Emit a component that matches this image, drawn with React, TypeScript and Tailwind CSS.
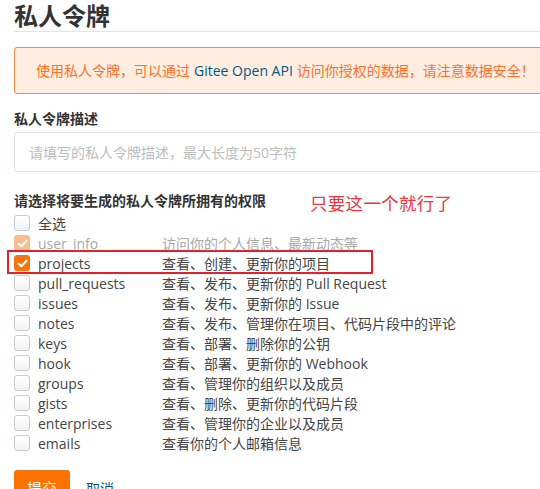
import React from "react";

const rows: { name: string; desc: string; state?: "disabled" | "checked" }[] = [
  { name: "user_info", desc: "访问你的个人信息、最新动态等", state: "disabled" },
  { name: "projects", desc: "查看、创建、更新你的项目", state: "checked" },
  { name: "pull_requests", desc: "查看、发布、更新你的 Pull Request" },
  { name: "issues", desc: "查看、发布、更新你的 Issue" },
  { name: "notes", desc: "查看、发布、管理你在项目、代码片段中的评论" },
  { name: "keys", desc: "查看、部署、删除你的公钥" },
  { name: "hook", desc: "查看、部署、更新你的 Webhook" },
  { name: "groups", desc: "查看、管理你的组织以及成员" },
  { name: "gists", desc: "查看、删除、更新你的代码片段" },
  { name: "enterprises", desc: "查看、管理你的企业以及成员" },
  { name: "emails", desc: "查看你的个人邮箱信息" },
];

function Box({ state }: { state?: "disabled" | "checked" }) {
  if (state === "checked" || state === "disabled") {
    return (
      <div
        className={`flex h-4 w-4 items-center justify-center rounded-[3px] ${
          state === "checked" ? "bg-[#f7730e]" : "bg-[#fbbd8d]"
        }`}
      >
        <svg width="11" height="11" viewBox="0 0 10 10">
          <path d="M1.5 5.2 L4 7.5 L8.6 2.6" fill="none" stroke="white" strokeWidth="2" strokeLinecap="round" strokeLinejoin="round" />
        </svg>
      </div>
    );
  }
  return <div className="h-4 w-4 rounded-[3px] border border-[#c9ccd2] bg-gradient-to-b from-white to-[#f1f2f4]" />;
}

export default function App() {
  return (
    <div
      className="relative h-[489px] w-[540px] overflow-hidden bg-white pl-[14px] text-[14px] text-[#444]"
      style={{ fontFamily: '"Open Sans", "Noto Sans CJK SC", sans-serif' }}
    >
      <div className="border-b border-[#e2e4e8]">
        <h1 className="text-[24px] font-bold leading-[31px] text-[#333]">私人令牌</h1>
      </div>

      <div className="mt-[15px] flex h-[47px] w-[560px] items-center rounded-[3px] border border-[#f08a45] bg-[#feede0] pl-[21px] text-[14px] text-[#f4742c]">
        <span>使用私人令牌，可以通过</span>
        <span className="mx-[4px] text-[#005a87]">Gitee Open API</span>
        <span>访问你授权的数据，请注意数据安全！</span>
      </div>

      <div className="mt-[15px] text-[14px] font-bold leading-[20px] text-[#333]">私人令牌描述</div>
      <div className="mt-[3px] flex h-[40px] w-[560px] items-center rounded-[3px] border border-[#dcdfe5] pl-[14px] text-[#bdbdbd]">
        请填写的私人令牌描述，最大长度为50字符
      </div>

      <div className="relative mt-[19px] text-[14px] font-bold leading-[20px] text-[#333]">
        请选择将要生成的私人令牌所拥有的权限
        <span className="absolute left-[296px] top-[0px] text-[17.5px] font-normal leading-[24px] tracking-[0.3px] text-[#e8373f]">
          只要这一个就行了
        </span>
      </div>

      <div className="mt-[2px] flex flex-col">
        <div className="flex h-5 items-center">
          <Box />
          <span className="ml-[8px] text-[#444]">全选</span>
        </div>
        {rows.map((r) => (
          <div key={r.name} className="relative flex h-5 items-center">
            <Box state={r.state} />
            <span className={`ml-[8px] w-[124px] ${r.state === "disabled" ? "text-[#a9a9a9]" : "text-[#444]"}`}>
              {r.name}
            </span>
            <span className={r.state === "disabled" ? "text-[#a9a9a9]" : "text-[#444]"}>{r.desc}</span>
            {r.state === "checked" && (
              <div className="absolute left-[-7px] top-[-3px] h-[24px] w-[366px] border-2 border-[#e3202e]" />
            )}
          </div>
        ))}
      </div>

      <div className="mt-[17px] flex items-center gap-[16px]">
        <button className="h-[36px] w-[56px] rounded-[3px] bg-[#fe7300] text-[15px] text-white">提交</button>
        <span className="text-[#005a87]">取消</span>
      </div>
    </div>
  );
}
